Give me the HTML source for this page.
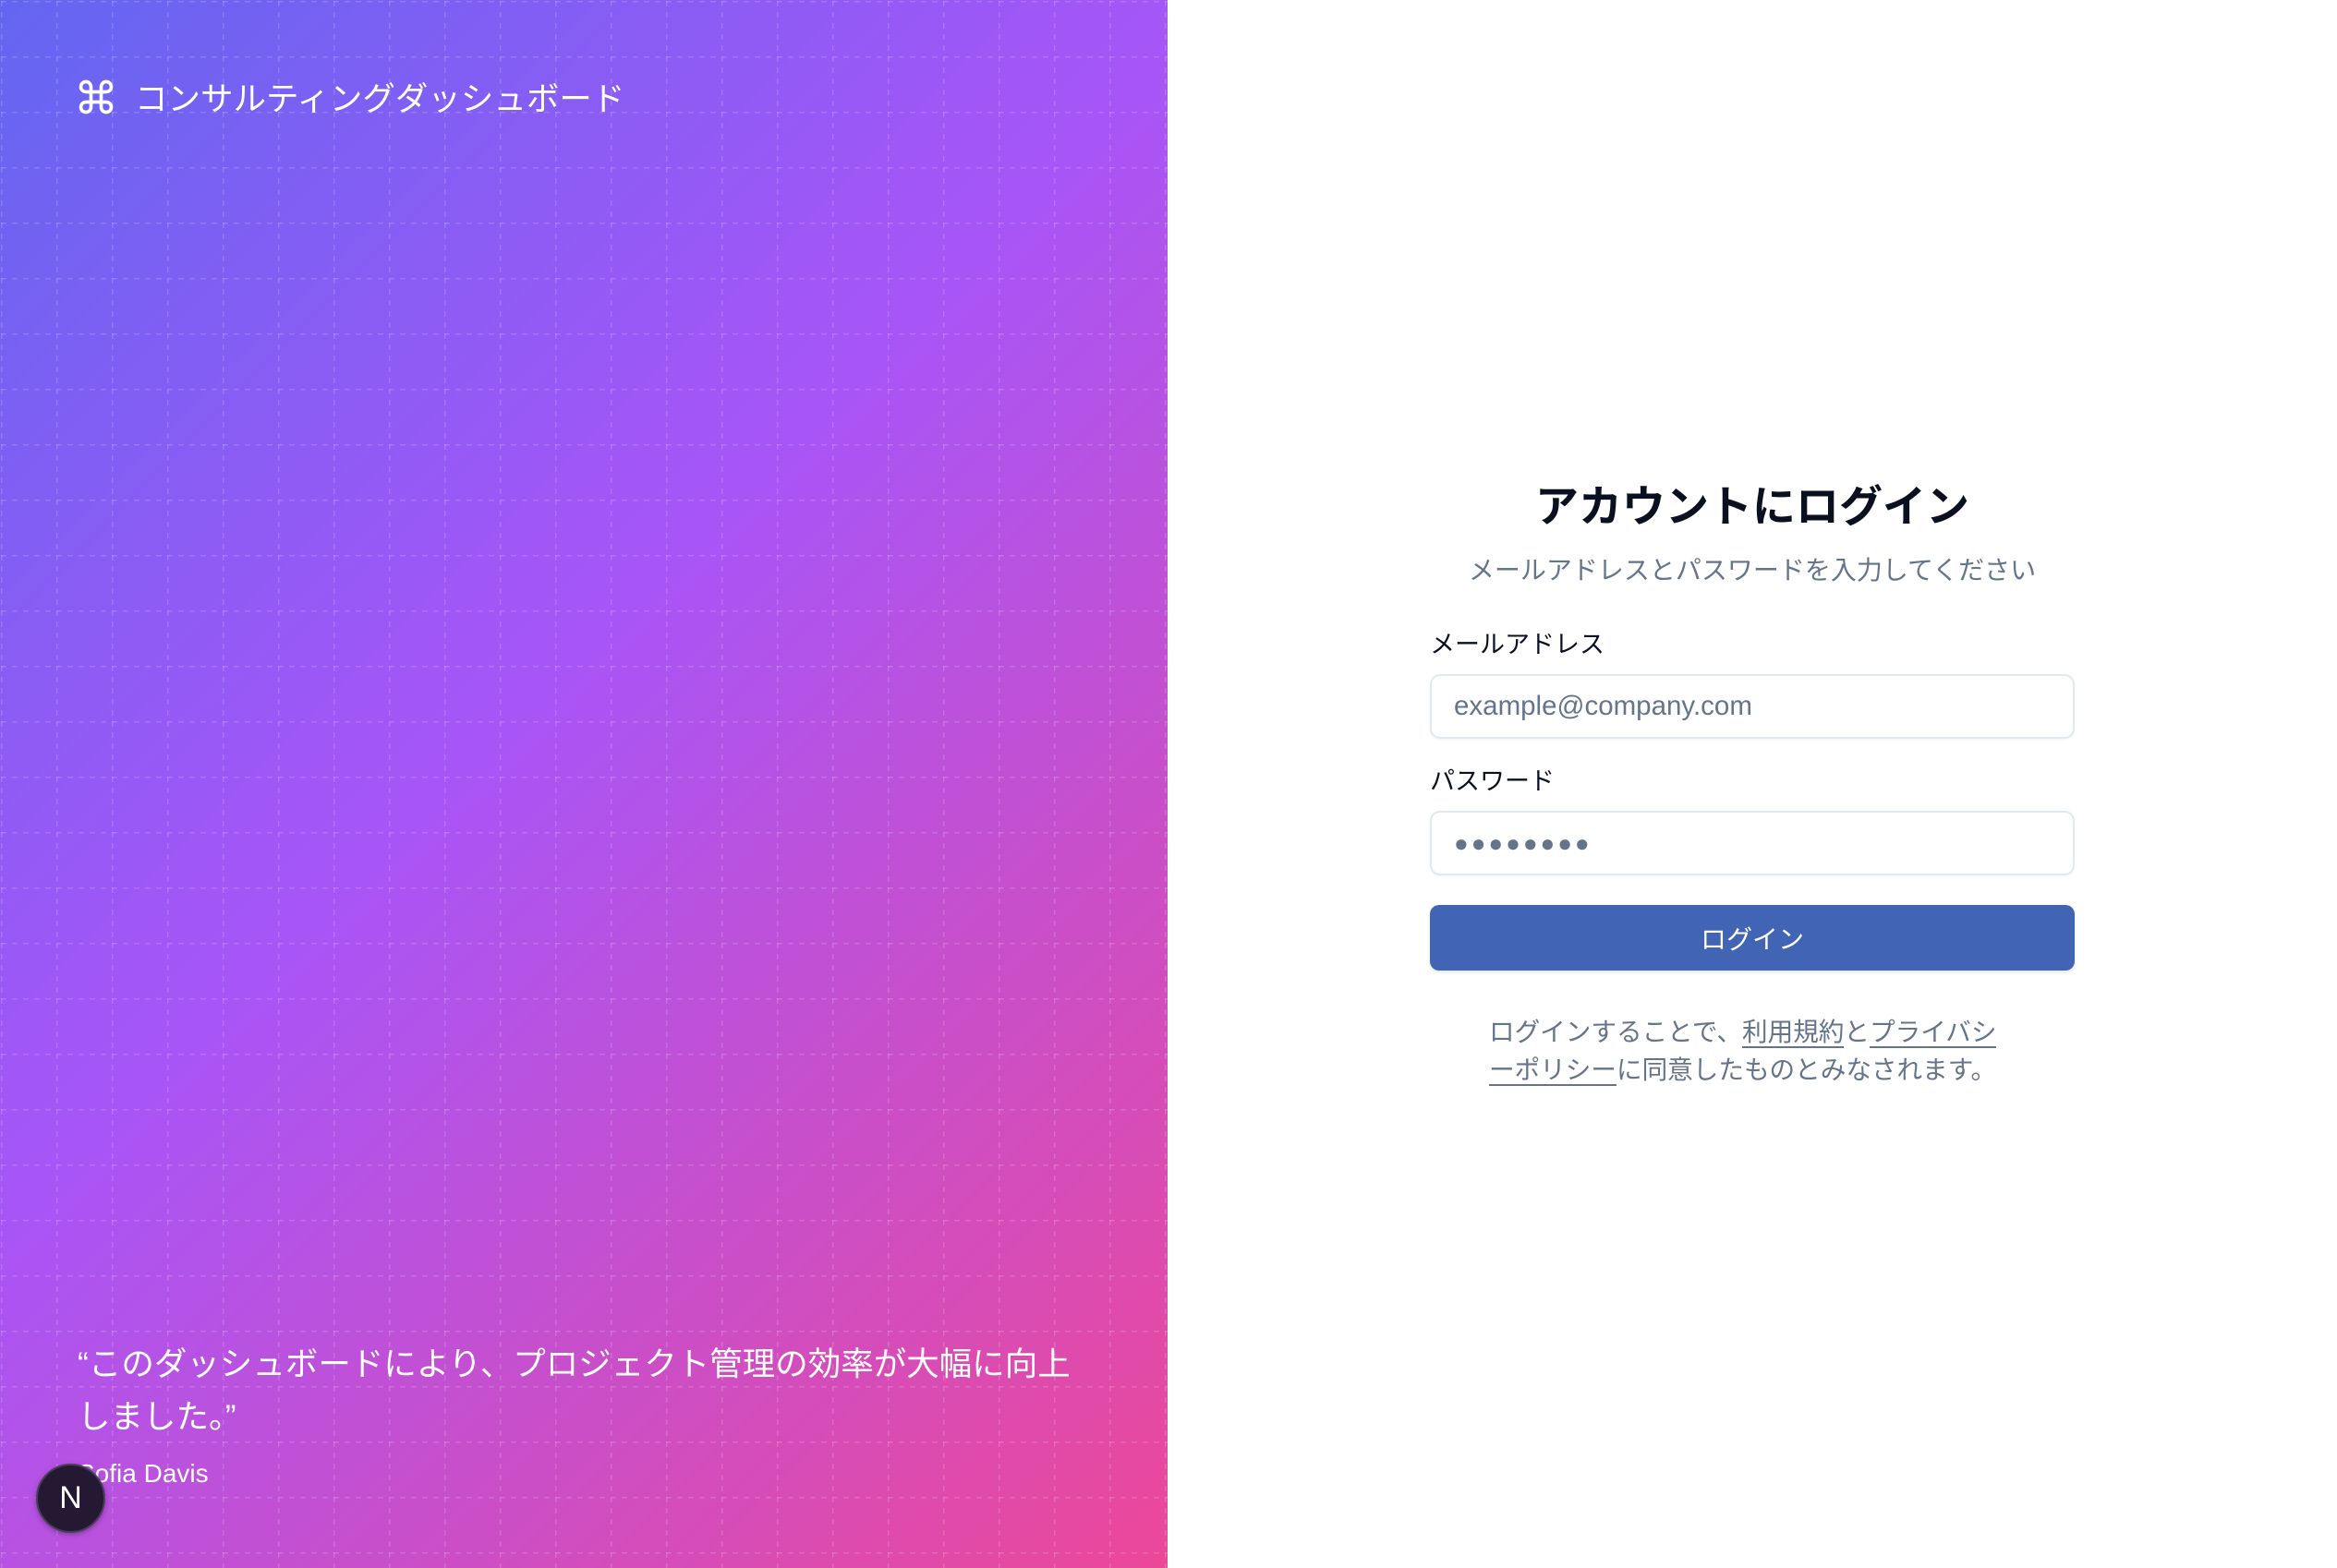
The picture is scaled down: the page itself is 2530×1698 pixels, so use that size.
<!DOCTYPE html>
<html><head><meta charset="utf-8">
<style>
*{margin:0;padding:0;box-sizing:border-box}
html,body{width:2530px;height:1698px;overflow:hidden;background:#fff;font-family:"Liberation Sans","Noto Sans CJK JP",sans-serif}
.left{position:absolute;left:0;top:0;width:1264px;height:1698px;background:linear-gradient(135deg,#6366f1 0%,#a855f7 45%,#ec4899 100%);overflow:hidden}
.grid{position:absolute;left:0;top:0}
.logo{position:absolute;left:82px;top:79px;display:flex;align-items:center;color:#fff;font-size:35.5px}
.logo svg{margin-right:20px}
.quote{position:absolute;left:84px;top:1449px;width:1100px;color:#fff;font-size:35.5px;line-height:57px}
.name{position:absolute;left:84px;top:1580px;color:#fff;font-size:28px;font-weight:500}
.av{position:absolute;left:39px;top:1585px;width:75px;height:75px;border-radius:50%;background:#241832;border:2px solid #4a3d5c;color:#fff;font-size:34px;display:flex;align-items:center;justify-content:center;box-shadow:0 2px 6px rgba(0,0,0,.3)}
.form{position:absolute;left:1548px;width:698px;top:516px;text-align:center}
h1{font-size:47px;font-weight:700;color:#0b1020;line-height:66px}
.sub{font-size:28px;color:#64748b;margin-top:18px;line-height:36px}
.lab{text-align:left;font-size:27px;color:#0b1020;line-height:36px}
.inp{height:70px;border:2px solid #e2e8f0;border-radius:11px;text-align:left;padding-left:24px;font-size:29.5px;color:#64748b;display:flex;align-items:center;box-shadow:0 1px 2px rgba(0,0,0,.05)}
.btn{height:71px;border-radius:10px;background:#4264b4;color:#fff;font-size:28px;display:flex;align-items:center;justify-content:center;box-shadow:0 2px 4px rgba(0,0,0,.1)}
.foot{font-size:27.6px;color:#64748b;line-height:41px;width:570px;margin:0 auto;text-align:left}
.foot u{text-decoration:none;border-bottom:2px solid #64748b}
</style></head><body>
<div class="left">
<svg class="grid" width="1264" height="1698">
<defs><pattern id="g" x="1" y="1" width="60" height="60" patternUnits="userSpaceOnUse">
<line x1="0" y1="0.5" x2="60" y2="0.5" stroke="rgba(255,255,255,0.16)" stroke-width="2" stroke-dasharray="6 6"/>
<line x1="0.5" y1="0" x2="0.5" y2="60" stroke="rgba(255,255,255,0.16)" stroke-width="2" stroke-dasharray="6 6"/>
</pattern></defs>
<rect width="1264" height="1698" fill="url(#g)"/>
</svg>
<div class="logo"><svg width="44" height="44" viewBox="0 0 24 24" fill="none" stroke="#fff" stroke-width="2" stroke-linecap="round" stroke-linejoin="round"><path d="M15 6v12a3 3 0 1 0 3-3H6a3 3 0 1 0 3 3V6a3 3 0 1 0-3 3h12a3 3 0 1 0-3-3"/></svg>コンサルティングダッシュボード</div>
<div class="quote">“このダッシュボードにより、プロジェクト管理の効率が大幅に向上<br>しました。”</div>
<div class="name">Sofia Davis</div>
<div class="av">N</div>
</div>
<div class="form">
<h1>アカウントにログイン</h1>
<div class="sub">メールアドレスとパスワードを入力してください</div>
<div class="lab" style="margin-top:44px">メールアドレス</div>
<div class="inp" style="margin-top:14px">example@company.com</div>
<div class="lab" style="margin-top:28px">パスワード</div>
<div class="inp" style="margin-top:14px;letter-spacing:3px;font-size:26px">●●●●●●●●</div>
<div class="btn" style="margin-top:32px">ログイン</div>
<div class="foot" style="margin-top:46px">ログインすることで、<u>利用規約</u>と<u>プライバシーポリシー</u>に同意したものとみなされます。</div>
</div>
</body></html>
